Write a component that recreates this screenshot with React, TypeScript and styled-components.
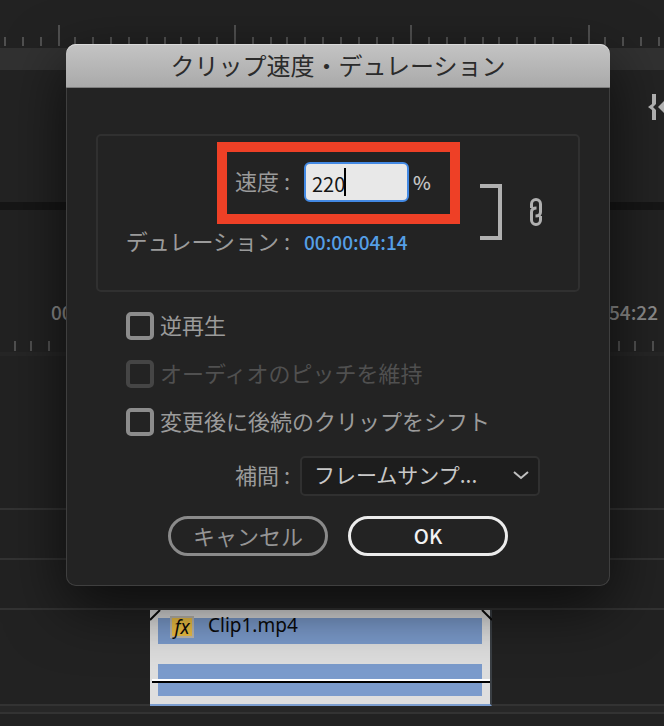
import React from "react";
import styled, { createGlobalStyle } from "styled-components";

const GlobalStyle = createGlobalStyle`
  * { box-sizing: border-box; }
  body {
    margin: 0;
    background: #212121;
    font-family: "Noto Sans CJK JP", "Noto Sans", sans-serif;
    font-size: 22px;
    line-height: 32px;
    color: #9b9b9b;
  }
  input, select, button { font: inherit; }
`;

const Workspace = styled.div`
  position: relative;
  display: flex;
  flex-direction: column;
  min-height: 100vh;
  overflow: hidden;
  background: #222222;
`;

const Ruler = styled.svg`
  display: block;
  flex: none;
  width: 100%;
`;

const Band = styled.div<{ $height: number; $color: string }>`
  flex: none;
  height: ${(p) => p.$height}px;
  background: ${(p) => p.$color};
`;

const MonitorPanel = styled.div`
  display: flex;
  justify-content: flex-end;
  align-items: flex-start;
  height: 132px;
  padding-top: 24px;
  background: #232323;
`;

const Timecodes = styled.div`
  display: flex;
  justify-content: space-between;
  height: 131px;
  padding: 86px 6px 0 51px;
  font-size: 19px;
  font-weight: 500;
  color: #8b8b8b;
`;

const Track = styled.div<{ $height: number }>`
  flex: none;
  height: ${(p) => p.$height}px;
  border-bottom: 2px solid #333;
`;

const ClipTrack = styled.div`
  position: relative;
  flex: none;
  padding-left: 150px;
  height: 96px;
  border-bottom: 2px solid #333;
`;

const Clip = styled.div`
  position: relative;
  width: 342px;
  height: 96px;
  padding: 8px 8px 0;
  border-right: 2px solid #3a3f44;
  border-bottom: 2px solid #7b9dcf;
  background: #dedede;
`;

const ClipHeader = styled.div`
  display: flex;
  align-items: center;
  gap: 14px;
  height: 26px;
  padding-left: 12px;
  background: #7b9bcc;
  color: #0a0a0a;
  font-family: "Noto Sans", sans-serif;
  font-size: 19px;
  line-height: 22px;
`;

const FxBadge = styled.span`
  display: flex;
  align-items: center;
  justify-content: center;
  width: 24px;
  height: 22px;
  margin-bottom: 8px;
  border: 2px solid #bdb9b0;
  background: #eec044;
  font-style: italic;
  line-height: 18px;
`;

const ClipName = styled.span`
  padding-bottom: 12px;
`;

const ClipBody = styled.div`
  height: 32px;
  margin-top: 20px;
  background: #7b9bcc;
`;

const VolumeLine = styled.div`
  position: absolute;
  left: 2px;
  right: 0;
  top: 69px;
  height: 4px;
  border-top: 2px solid #fff;
  border-bottom: 2px solid #000;
`;

const Corner = styled.svg<{ $side: "left" | "right" }>`
  position: absolute;
  top: 0;
  ${(p) => (p.$side === "left" ? "left: 0;" : "right: -2px;")}
`;

const Overlay = styled.div`
  position: absolute;
  inset: 0;
  padding: 44px 54px 0 66px;
`;

const Dialog = styled.section`
  border-radius: 10px;
  background: #232323;
  box-shadow: 0 20px 60px rgba(0, 0, 0, 0.65);
`;

const TitleBar = styled.h1`
  display: flex;
  align-items: center;
  justify-content: center;
  height: 44px;
  margin: 0;
  padding-bottom: 2px;
  border-radius: 10px 10px 0 0;
  box-shadow: inset 0 1px #dadada, inset 0 -1px #7e7e7e;
  background: linear-gradient(#c4c4c4, #a9a9a9);
  color: #2b2b2b;
  font-size: 24px;
  font-weight: 400;
`;

const Form = styled.form`
  padding: 46px 29px 29px;
  border: 1px solid #3f3f3f;
  border-top: 0;
  border-radius: 0 0 10px 10px;
`;

const Group = styled.div`
  display: flex;
  align-items: center;
  height: 158px;
  padding: 0 36px 0 26px;
  border: 2px solid #303030;
  border-radius: 5px;
`;

const Fields = styled.div`
  display: grid;
  grid-template-columns: 166px auto;
  grid-template-rows: 40px 40px;
  row-gap: 20px;
  column-gap: 14px;
  align-items: center;
  align-self: flex-start;
  padding-top: 26px;
`;

const FieldLabel = styled.label`
  padding-bottom: 4px;
  text-align: right;
  white-space: nowrap;
`;

const SpeedValue = styled.div`
  position: relative;
  display: flex;
  align-items: center;
  gap: 4px;
  color: #c4c4c4;
  font-size: 20px;
`;

const Unit = styled.span`
  font-size: 19px;
  font-weight: 500;
`;

const SpeedInput = styled.input`
  width: 105px;
  height: 40px;
  padding: 3px 6px 0;
  border: 2px solid #4389e3;
  border-radius: 6px;
  outline: 0;
  background: #e8e8e8;
  color: #151515;
`;

const Caret = styled.span`
  position: absolute;
  left: 40px;
  top: 6px;
  width: 2px;
  height: 28px;
  background: #000;
`;

const Highlight = styled.div`
  position: absolute;
  top: -20px;
  left: -87px;
  width: 243px;
  height: 82px;
  border: 10px solid #ee4026;
  pointer-events: none;
`;

const Timecode = styled.output`
  color: #559fe6;
  font-size: 19px;
  font-weight: 500;
`;

const LinkArea = styled.div`
  display: flex;
  align-items: center;
  gap: 28px;
  margin-left: auto;
  padding-bottom: 2px;
`;

const CheckRow = styled.label<{ $off?: boolean }>`
  display: flex;
  align-items: center;
  gap: 6px;
  height: 28px;
  color: ${(p) => (p.$off ? "#505050" : "#9b9b9b")};
`;

const CheckText = styled.span`
  padding-bottom: 4px;
`;

const Checks = styled.div`
  display: flex;
  flex-direction: column;
  gap: 20px;
  padding: 20px 0 20px 30px;
`;

const Checkbox = styled.input`
  appearance: none;
  width: 28px;
  height: 28px;
  margin: 0;
  border: 4px solid #8c8c8c;
  border-radius: 5px;
  &:disabled { border-color: #454545; }
`;

const SelectRow = styled.div`
  display: flex;
  align-items: center;
  justify-content: flex-end;
  gap: 10px;
  padding-right: 40px;
`;

const SelectBox = styled.div`
  position: relative;
  width: 240px;
`;

const Select = styled.select`
  appearance: none;
  display: block;
  width: 100%;
  height: 40px;
  padding: 0 36px 4px 12px;
  border: 2px solid #303030;
  border-radius: 5px;
  background: #1d1d1d;
  color: #c8c8c8;
  font-size: 21px;
`;

const Chevron = styled.svg`
  position: absolute;
  right: 10px;
  top: 14px;
  pointer-events: none;
`;

const Actions = styled.div`
  display: flex;
  justify-content: center;
  gap: 20px;
  padding-top: 20px;
`;

const Button = styled.button<{ $primary?: boolean }>`
  width: 160px;
  height: 40px;
  padding: ${(p) => (p.$primary ? "0" : "0 0 4px")};
  border: 3px solid ${(p) => (p.$primary ? "#ececec" : "#8a8a8a")};
  border-radius: 20px;
  background: transparent;
  color: ${(p) => (p.$primary ? "#f2f2f2" : "#959595")};
  font-size: ${(p) => (p.$primary ? 20 : 22)}px;
  font-weight: ${(p) => (p.$primary ? 500 : 400)};
  line-height: 32px;
`;

const topTicks = Array.from({ length: 80 }, (_, i) => i - 3).map((i) => ({
  x: Math.floor((58 + (i * 53) / 3) / 2) * 2,
  major: i % 10 === 0,
}));

const timelineTicks = Array.from({ length: 80 }, (_, i) => Math.floor((14.4 + i * 17.26) / 2) * 2);

export default function App() {
  return (
    <>
      <GlobalStyle />
      <Workspace>
        <Ruler height="48" aria-hidden="true">
          {topTicks.map((t) => (
            <rect key={t.x} x={t.x} y={t.major ? 25 : 37} width="2" height={t.major ? 21 : 9} fill="#505050" />
          ))}
        </Ruler>
        <Band $height={22} $color="#313131" />
        <MonitorPanel>
          <svg width="16" height="26" viewBox="0 0 16 26" aria-hidden="true">
            <path d="M4 0h4v10l-3 3 3 3v10H4V16l-4-3 4-3z" fill="#b4b4b4" />
            <path d="M10 13l6-6v12z" fill="#b4b4b4" />
          </svg>
        </MonitorPanel>
        <Band $height={8} $color="#161616" />
        <Timecodes>
          <span>00</span>
          <span>54:22</span>
        </Timecodes>
        <Ruler height="11" aria-hidden="true">
          {timelineTicks.map((x) => (
            <rect key={x} x={x} y="0" width="2" height="10" fill="#505050" />
          ))}
        </Ruler>
        <Band $height={4} $color="#262626" />
        <Track $height={154} />
        <Track $height={50} />
        <Track $height={50} />
        <ClipTrack>
          <Clip>
            <ClipHeader>
              <FxBadge>fx</FxBadge>
              <ClipName>Clip1.mp4</ClipName>
            </ClipHeader>
            <ClipBody />
            <VolumeLine />
            <Corner $side="left" width="11" height="11" viewBox="0 0 11 11" aria-hidden="true">
              <path d="M0 10L10 0" stroke="#0a0a0a" strokeWidth="2" />
            </Corner>
            <Corner $side="right" width="11" height="11" viewBox="0 0 11 11" aria-hidden="true">
              <path d="M1 0L11 10" stroke="#0a0a0a" strokeWidth="2" />
            </Corner>
          </Clip>
        </ClipTrack>
        <Band $height={6} $color="#272727" />
        <Band $height={2} $color="#333333" />

        <Overlay>
          <Dialog role="dialog" aria-labelledby="dialog-title">
            <TitleBar id="dialog-title">クリップ速度・デュレーション</TitleBar>
            <Form onSubmit={(e) => e.preventDefault()}>
              <Group>
                <Fields>
                  <FieldLabel htmlFor="speed">速度 :</FieldLabel>
                  <SpeedValue>
                    <SpeedInput id="speed" defaultValue="220" />
                    <Unit>%</Unit>
                    <Caret />
                    <Highlight />
                  </SpeedValue>
                  <FieldLabel htmlFor="duration">デュレーション :</FieldLabel>
                  <Timecode id="duration">00:00:04:14</Timecode>
                </Fields>
                <LinkArea>
                  <svg width="22" height="56" viewBox="0 0 22 56" aria-hidden="true">
                    <path d="M0 2h20v52H0" fill="none" stroke="#b0b0b0" strokeWidth="4" />
                  </svg>
                  <svg width="12" height="28" viewBox="0 0 12 28" aria-hidden="true">
                    <g fill="none" stroke="#b0b0b0" strokeWidth="3">
                      <path d="M1.5 10V6a4.5 4.5 0 0 1 9 0v8c0 2.5-1.5 4-5 4" />
                      <path d="M10.5 18v4a4.5 4.5 0 0 1-9 0v-8c0-2.5 1.5-4 5-4" />
                    </g>
                  </svg>
                </LinkArea>
              </Group>
              <Checks>
                <CheckRow>
                  <Checkbox type="checkbox" />
                  <CheckText>逆再生</CheckText>
                </CheckRow>
                <CheckRow $off>
                  <Checkbox type="checkbox" disabled />
                  <CheckText>オーディオのピッチを維持</CheckText>
                </CheckRow>
                <CheckRow>
                  <Checkbox type="checkbox" />
                  <CheckText>変更後に後続のクリップをシフト</CheckText>
                </CheckRow>
              </Checks>
              <SelectRow>
                <FieldLabel htmlFor="interpolation">補間 :</FieldLabel>
                <SelectBox>
                  <Select id="interpolation">
                    <option>フレームサンプ...</option>
                  </Select>
                  <Chevron width="18" height="12" viewBox="0 0 18 12" aria-hidden="true">
                    <path d="M2 2l7 6 7-6" fill="none" stroke="#c0c0c0" strokeWidth="2" />
                  </Chevron>
                </SelectBox>
              </SelectRow>
              <Actions>
                <Button type="button">キャンセル</Button>
                <Button type="submit" $primary>OK</Button>
              </Actions>
            </Form>
          </Dialog>
        </Overlay>
      </Workspace>
    </>
  );
}
